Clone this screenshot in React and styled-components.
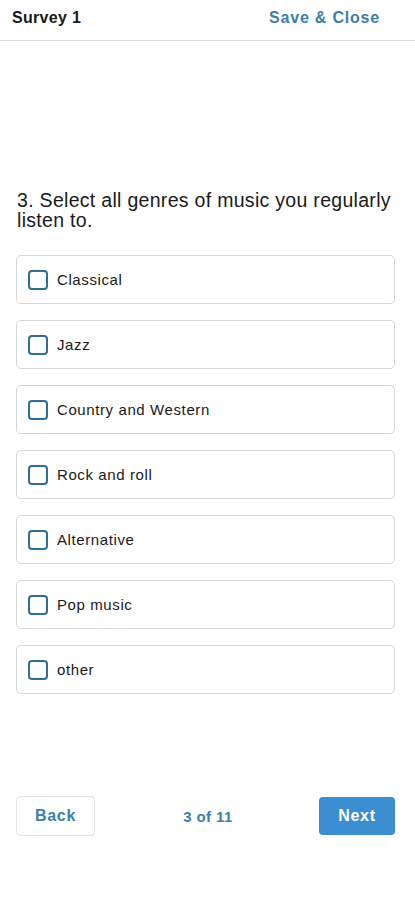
import React, { useState } from "react";
import styled, { createGlobalStyle } from "styled-components";

const Global = createGlobalStyle`
  html, body { margin: 0; padding: 0; background: #fff; }
  body { font-family: "Helvetica Neue", "Liberation Sans", Arial, sans-serif; color: #1a1a1a; }
`;

const Page = styled.div`
  width: 415px;
  height: 900px;
  display: flex;
  flex-direction: column;
  background: #fff;
`;

const Header = styled.header`
  height: 41px;
  box-sizing: border-box;
  display: flex;
  align-items: center;
  justify-content: space-between;
  padding: 0 35px 4px 12px;
  border-bottom: 1px solid #dcdcdc;
`;

const Title = styled.h1`
  margin: 0;
  font-size: 16px;
  font-weight: 700;
  letter-spacing: 0.3px;
  color: #1a1a1a;
`;

const LinkButton = styled.button`
  border: none;
  background: none;
  padding: 0;
  font-family: inherit;
  font-size: 16px;
  font-weight: 700;
  letter-spacing: 0.8px;
  color: #3b7fae;
`;

const Body = styled.main`
  flex: 1;
  padding: 149px 20px 0 16px;
  display: flex;
  flex-direction: column;
`;

const Question = styled.h2`
  margin: 0 0 25px 1px;
  font-size: 19.5px;
  font-weight: 400;
  line-height: 20px;
  letter-spacing: 0.3px;
  color: #1a1a1a;
`;

const Options = styled.div`
  display: flex;
  flex-direction: column;
  gap: 16px;
`;

const Option = styled.label`
  height: 49px;
  box-sizing: border-box;
  display: flex;
  align-items: center;
  gap: 9px;
  padding: 0 11px;
  border: 1.5px solid #d6d6d6;
  border-radius: 5px;
  font-size: 15px;
  letter-spacing: 0.6px;
  color: #1a1a1a;
`;

const Box = styled.span`
  width: 20px;
  height: 20px;
  box-sizing: border-box;
  border: 2px solid ${(p) => (p.$checked ? "#3b8fd0" : "#2f6f95")};
  border-radius: 4px;
  background: ${(p) => (p.$checked ? "#3b8fd0" : "#fff")};
  flex-shrink: 0;
`;

const Footer = styled.footer`
  display: flex;
  align-items: center;
  justify-content: space-between;
  padding: 0 20px 64px 16px;
`;

const BackButton = styled.button`
  width: 79px;
  height: 40px;
  border: 1.5px solid #e2e2e2;
  border-radius: 4px;
  background: #fff;
  font-family: inherit;
  font-size: 16px;
  font-weight: 700;
  letter-spacing: 0.7px;
  color: #3b7fae;
`;

const Progress = styled.span`
  font-size: 15px;
  font-weight: 700;
  letter-spacing: 0.4px;
  color: #3b7fae;
  margin-left: 2px;
`;

const NextButton = styled.button`
  width: 76px;
  height: 38px;
  border: none;
  border-radius: 4px;
  background: #3b8fd0;
  font-family: inherit;
  font-size: 16px;
  font-weight: 700;
  letter-spacing: 0.7px;
  color: #fff;
`;

const genres = [
  "Classical",
  "Jazz",
  "Country and Western",
  "Rock and roll",
  "Alternative",
  "Pop music",
  "other",
];

export default function App() {
  const [checked, setChecked] = useState({});
  return (
    <Page>
      <Global />
      <Header>
        <Title>Survey 1</Title>
        <LinkButton>Save &amp; Close</LinkButton>
      </Header>
      <Body>
        <Question>3. Select all genres of music you regularly listen to.</Question>
        <Options>
          {genres.map((g) => (
            <Option key={g} onClick={() => setChecked((c) => ({ ...c, [g]: !c[g] }))}>
              <Box $checked={!!checked[g]} />
              {g}
            </Option>
          ))}
        </Options>
      </Body>
      <Footer>
        <BackButton>Back</BackButton>
        <Progress>3 of 11</Progress>
        <NextButton>Next</NextButton>
      </Footer>
    </Page>
  );
}
